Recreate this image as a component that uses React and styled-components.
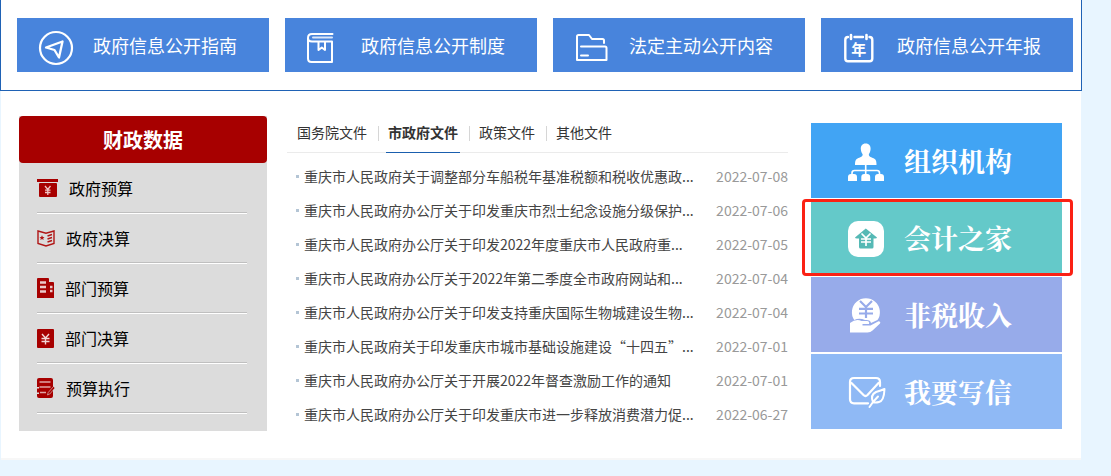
import React, { useState } from 'react'
import styled, { createGlobalStyle } from 'styled-components'

const GlobalStyle = createGlobalStyle`
  * {
    box-sizing: border-box;
  }
  body {
    margin: 0;
    background: #e8f5ff;
    font-family: 'Noto Sans CJK SC', 'Noto Sans', sans-serif;
    font-size: 14px;
    color: #444;
  }
  ul {
    list-style: none;
    margin: 0;
    padding: 0;
  }
  a {
    color: inherit;
    text-decoration: none;
  }
  svg {
    flex: none;
    overflow: visible;
  }
`

const Page = styled.div`
  margin-right: 29px;
`

const TopBar = styled.nav`
  display: grid;
  grid-template-columns: repeat(4, 1fr);
  gap: 16px;
  padding: 18px 8px 18px 16px;
  background: #fff;
  border: 1px solid #1f62b5;
  border-top: none;
`

const TopLink = styled.a`
  display: flex;
  align-items: center;
  gap: 18px;
  height: 54px;
  padding-left: 22px;
  background: #4884dc;
  color: #fff;
  font-size: 18px;
  white-space: nowrap;
  &:hover {
    opacity: 0.9;
  }
`

const Content = styled.main`
  display: grid;
  grid-template-columns: 248px minmax(0, 1fr) 251px;
  align-items: start;
  column-gap: 20px;
  margin: 0 1px;
  padding: 25px 19px 27px 18px;
  background: #fff;
  border-bottom: 2px solid #f7f7f7;
`

const Sidebar = styled.aside`
  background: #dcdcdc;
  padding-bottom: 17px;
`

const SidebarTitle = styled.h2`
  margin: 0;
  height: 47px;
  line-height: 47px;
  border-radius: 4px;
  background: #a70000;
  color: #fff;
  font-size: 20px;
  font-weight: 700;
  text-align: center;
`

const SidebarList = styled.ul`
  padding: 1px 20px 0 18px;
`

const SidebarItem = styled.li`
  height: 50px;
  border-bottom: 1px solid #fff;
`

const SidebarLink = styled.a`
  display: flex;
  align-items: center;
  gap: 11px;
  height: 49px;
  border-bottom: 1px solid #bfbfbf;
  color: #000;
  font-size: 16px;
`

const News = styled.section`
  padding-right: 3px;
`

const Tabs = styled.ul`
  display: flex;
  align-items: center;
  height: 37px;
  border-bottom: 1px solid #ebebeb;
`

const TabItem = styled.li`
  position: relative;
  display: flex;
  padding: 0 9px 0 8px;
  height: 37px;
  & + &::before {
    content: '';
    position: absolute;
    left: 0;
    top: 10px;
    width: 1px;
    height: 15px;
    background: #d6d6d6;
  }
`

const Tab = styled.button`
  height: 37px;
  padding: 0 2px 3px;
  border: none;
  border-bottom: 1px solid ${props => (props.$active ? '#1a5fae' : 'transparent')};
  background: none;
  color: #333;
  font-family: inherit;
  font-size: 14px;
  font-weight: ${props => (props.$active ? 700 : 400)};
  white-space: nowrap;
  cursor: pointer;
`

const NewsList = styled.ul`
  padding: 6px 0 0 9px;
`

const NewsItem = styled.li`
  display: flex;
  align-items: center;
  height: 34px;
  &::before {
    content: '';
    flex: none;
    width: 3px;
    height: 3px;
    margin-right: 5px;
    background: #b4c5d5;
  }
`

const NewsLink = styled.a`
  flex: 1;
  min-width: 0;
  overflow: hidden;
  white-space: nowrap;
  &:hover {
    color: #1a5fae;
  }
`

const NewsDate = styled.time`
  color: #999;
`

const Banners = styled.div`
  display: grid;
  gap: 2px;
  padding-top: 7px;
`

const Banner = styled.a`
  position: relative;
  display: flex;
  align-items: center;
  gap: 20px;
  height: 75px;
  padding-left: 37px;
  background: ${props => props.$color};
  color: #fff;
  font-family: 'Noto Serif CJK SC', 'Noto Sans CJK SC', serif;
  font-size: 27px;
  font-weight: 700;
  white-space: nowrap;
`

// red frame drawn around the highlighted banner
const Frame = styled.span`
  position: absolute;
  z-index: 1;
  top: -1px;
  right: -11px;
  bottom: -1px;
  left: -9px;
  border: 3px solid #fb2114;
  border-radius: 4px;
`

const Line = ({ children, width = 36, height = 40 }) => (
  <svg width={width} height={height} fill="none" stroke="#fff" strokeWidth="2" strokeLinejoin="round" strokeLinecap="round" aria-hidden="true">
    {children}
  </svg>
)

const GuideIcon = () => (
  <Line>
    <circle cx="17" cy="23" r="16" strokeWidth="2.200" />
    <path d="M7 22.500 23.500 16.500 20 32.500 15.500 25Z" strokeWidth="2.300" />
  </Line>
)

const BookIcon = () => (
  <Line>
    <path d="M25.500 9H5Q1 9 1 13V33.500Q1 37 4.500 37H25V16.500H5Q1 16.500 1 13" />
    <path d="M6 12.500H25" strokeOpacity="0.8" />
    <path d="M11.500 17V25L14.800 22.500 18 25V17" />
  </Line>
)

const FolderIcon = () => (
  <Line>
    <path d="M29 18V15.500Q29 14 27.500 14H17L14 10H3.500Q2 10 2 11.500V35H31.500V23Q31.500 21.500 30 21.500H6" />
    <path d="M6 30.500H13" />
  </Line>
)

const YearIcon = () => (
  <Line>
    <path d="M5 12Q2.300 12 2.300 15V33.500Q2.300 36.300 5 36.300H26.500Q29.300 36.300 29.300 33.500V15Q29.300 12 26.500 12M11.500 12H20" strokeWidth="2.4" />
    <path d="M8 10V14M23.500 10V14" strokeWidth="2.6" />
    <text x="15.800" y="30" textAnchor="middle" fill="#fff" stroke="none" fontSize="15" fontWeight="700">年</text>
  </Line>
)

const BudgetIcon = () => (
  <svg width="21" height="18" fill="#a70000" aria-hidden="true">
    <rect width="21" height="3" />
    <rect x="2" y="4" width="18" height="14" rx="1" />
    <path d="M8 7 10.800 10.500 13.500 7M10.800 10.500V16M8 11.200H13.500M8 13.500H13.500" fill="none" stroke="#f0c4c4" strokeWidth="1.3" />
  </svg>
)

const FinalIcon = () => (
  <svg width="18" height="17" fill="none" stroke="#b01515" strokeWidth="1.4" aria-hidden="true">
    <path d="M1 1 9 3.200 17 1V13.500L9 16 1 13.500Z" />
    <path d="M10.500 6 15 4.500M10.500 9 15 7.500M10.500 12 15 10.500" />
    <path d="M5 5.200 5.800 6.900 7.500 7.100 6.200 8.300 6.600 10 5 9.100 3.400 10 3.800 8.300 2.500 7.100 4.200 6.900Z" fill="#b01515" stroke="none" />
  </svg>
)

const BuildingIcon = () => (
  <svg width="17" height="20" fill="#a70000" aria-hidden="true">
    <path d="M1 0H11Q12 0 12 1V4H16Q17 4 17 5V20H0V1Q0 0 1 0Z" />
    <path d="M3 4.500H9M3 9H9M3 13.500H9M13 9H15.500M13 13H15.500" stroke="#ecc8c8" strokeWidth="2.600" />
  </svg>
)

const YuanIcon = () => (
  <svg width="17" height="19" fill="#a70000" aria-hidden="true">
    <rect width="17" height="19" rx="1" />
    <path d="M5 5 8.500 9 12 5M8.500 9V15.500M4.500 9.500H12.500M4.500 12.500H12.500" fill="none" stroke="#f3d6d6" strokeWidth="1.400" />
  </svg>
)

const ExecuteIcon = () => (
  <svg width="18" height="20" fill="#a70000" aria-hidden="true">
    <path d="M2 0H14Q16 0 16 2V18Q16 20 14 20H2Q0 20 0 18V16H2V14.500H0V10.500H2V9H0V2Q0 0 2 0Z" />
    <path d="M2.500 4H13.500M2.500 9H13.500M3 14.500H9" stroke="#e0a6a6" strokeWidth="1.600" />
    <path d="M10.500 17 11.200 14.500 16.500 8.500 18 10 12.800 16Z" stroke="#dcdcdc" strokeWidth="0.600" />
  </svg>
)

const OrgIcon = () => (
  <svg width="36" height="41" fill="#fff" aria-hidden="true">
    <path d="M17.700 3.500C21.300 3.500 22.800 6 22.600 9 22.400 12 21.300 13.300 20.800 14.500 20.900 17 23.500 17.300 26 18.500 28.300 19.700 28.500 22 28.500 25H7C7 22 7.200 19.700 9.500 18.500 12 17.300 14.600 17 14.700 14.500 14.100 13.300 13 12 12.800 9 12.600 6 14.100 3.500 17.700 3.500Z" />
    <path d="M17.700 25V34M4 34V33Q4 30.500 6.500 30.500H29Q31.500 30.500 31.500 33V34" fill="none" stroke="#fff" strokeWidth="1.600" />
    <path d="M0 41V37Q0 34 3 34H6Q9 34 9 37V41ZM13.300 41V37Q13.300 34 16.300 34H19.200Q22.200 34 22.200 37V41ZM27 41V37Q27 34 30 34H33Q36 34 36 37V41Z" />
  </svg>
)

const HouseIcon = () => (
  <svg width="36" height="41" aria-hidden="true">
    <rect y="4" width="36" height="36" rx="10" fill="#fff" />
    <path d="M17.800 11.500 29 20.500Q29 21.500 27 21.500H25.500V30Q25.500 31.500 24 31.500H12.500Q11 31.500 11 30V21.500H9Q7 21.500 7 20.500Z" fill="#55b9b5" />
    <path d="M13.500 16.500 18 21 22.500 16.500M18 21V29M13 22H23M13 25H23" fill="none" stroke="#fff" strokeWidth="1.700" />
  </svg>
)

const IncomeIcon = () => (
  <svg width="36" height="41" fill="#fff" aria-hidden="true">
    <path d="M6.300 26A14 14 0 1 1 29.500 26L23 29Q22.500 25.500 17 26Q11 23.500 6.300 26Z" />
    <path d="M12 7 18 13 24 7M18 13V24M11 14.800H25M11 19.500H25" fill="none" stroke="#97abea" strokeWidth="2.200" />
    <path d="M2 38.500V29Q8 24.500 13.500 27H19Q22 27.300 21 30H14.500V31.500H22.500L30.500 27.300Q33 27.500 32 29.500L24.500 36.500Q22.500 38.500 19.500 38.500Z" />
  </svg>
)

const MailIcon = () => (
  <Line width={36} height={41}>
    <path d="M20 32.300H6Q2 32.300 2 28.300V11Q2 7 6 7H28Q32 7 32 11V15M3.500 12 15.500 24Q17.500 26 19.500 24L30.500 12" strokeWidth="2.200" />
    <path d="M21.500 36 25 31Q22 24 28 21 33 19.500 36.500 18 36 30 31 31 27 32 25 31L30 25.500" />
  </Line>
)

const topLinks = [
  { text: '政府信息公开指南', Icon: GuideIcon },
  { text: '政府信息公开制度', Icon: BookIcon },
  { text: '法定主动公开内容', Icon: FolderIcon },
  { text: '政府信息公开年报', Icon: YearIcon }
]

const financeLinks = [
  { text: '政府预算', Icon: BudgetIcon },
  { text: '政府决算', Icon: FinalIcon },
  { text: '部门预算', Icon: BuildingIcon },
  { text: '部门决算', Icon: YuanIcon },
  { text: '预算执行', Icon: ExecuteIcon }
]

const tabs = ['国务院文件', '市政府文件', '政策文件', '其他文件']

const news = [
  { title: '重庆市人民政府关于调整部分车船税年基准税额和税收优惠政...', date: '2022-07-08' },
  { title: '重庆市人民政府办公厅关于印发重庆市烈士纪念设施分级保护...', date: '2022-07-06' },
  { title: '重庆市人民政府办公厅关于印发2022年度重庆市人民政府重...', date: '2022-07-05' },
  { title: '重庆市人民政府办公厅关于2022年第二季度全市政府网站和...', date: '2022-07-04' },
  { title: '重庆市人民政府办公厅关于印发支持重庆国际生物城建设生物...', date: '2022-07-04' },
  { title: '重庆市人民政府关于印发重庆市城市基础设施建设“十四五”...', date: '2022-07-01' },
  { title: '重庆市人民政府办公厅关于开展2022年督查激励工作的通知', date: '2022-07-01' },
  { title: '重庆市人民政府办公厅关于印发重庆市进一步释放消费潜力促...', date: '2022-06-27' }
]

const banners = [
  { text: '组织机构', color: '#41a4f4', Icon: OrgIcon },
  { text: '会计之家', color: '#64c9c9', Icon: HouseIcon, framed: true },
  { text: '非税收入', color: '#97abea', Icon: IncomeIcon },
  { text: '我要写信', color: '#8fb9f5', Icon: MailIcon }
]

function App() {
  const [active, setActive] = useState(1)

  return (
    <Page>
      <GlobalStyle />
      <TopBar>
        {topLinks.map(({ text, Icon }) => (
          <TopLink href='#' key={text}>
            <Icon />
            {text}
          </TopLink>
        ))}
      </TopBar>
      <Content>
        <Sidebar>
          <SidebarTitle>财政数据</SidebarTitle>
          <SidebarList>
            {financeLinks.map(({ text, Icon }) => (
              <SidebarItem key={text}>
                <SidebarLink href='#'>
                  <Icon />
                  {text}
                </SidebarLink>
              </SidebarItem>
            ))}
          </SidebarList>
        </Sidebar>
        <News>
          <Tabs>
            {tabs.map((tab, i) => (
              <TabItem key={tab}>
                <Tab type='button' $active={i === active} onClick={() => setActive(i)}>
                  {tab}
                </Tab>
              </TabItem>
            ))}
          </Tabs>
          <NewsList>
            {news.map(({ title, date }) => (
              <NewsItem key={title}>
                <NewsLink href='#'>{title}</NewsLink>
                <NewsDate dateTime={date}>{date}</NewsDate>
              </NewsItem>
            ))}
          </NewsList>
        </News>
        <Banners>
          {banners.map(({ text, color, Icon, framed }) => (
            <Banner href='#' key={text} $color={color}>
              <Icon />
              {text}
              {framed && <Frame />}
            </Banner>
          ))}
        </Banners>
      </Content>
    </Page>
  )
}

export default App
